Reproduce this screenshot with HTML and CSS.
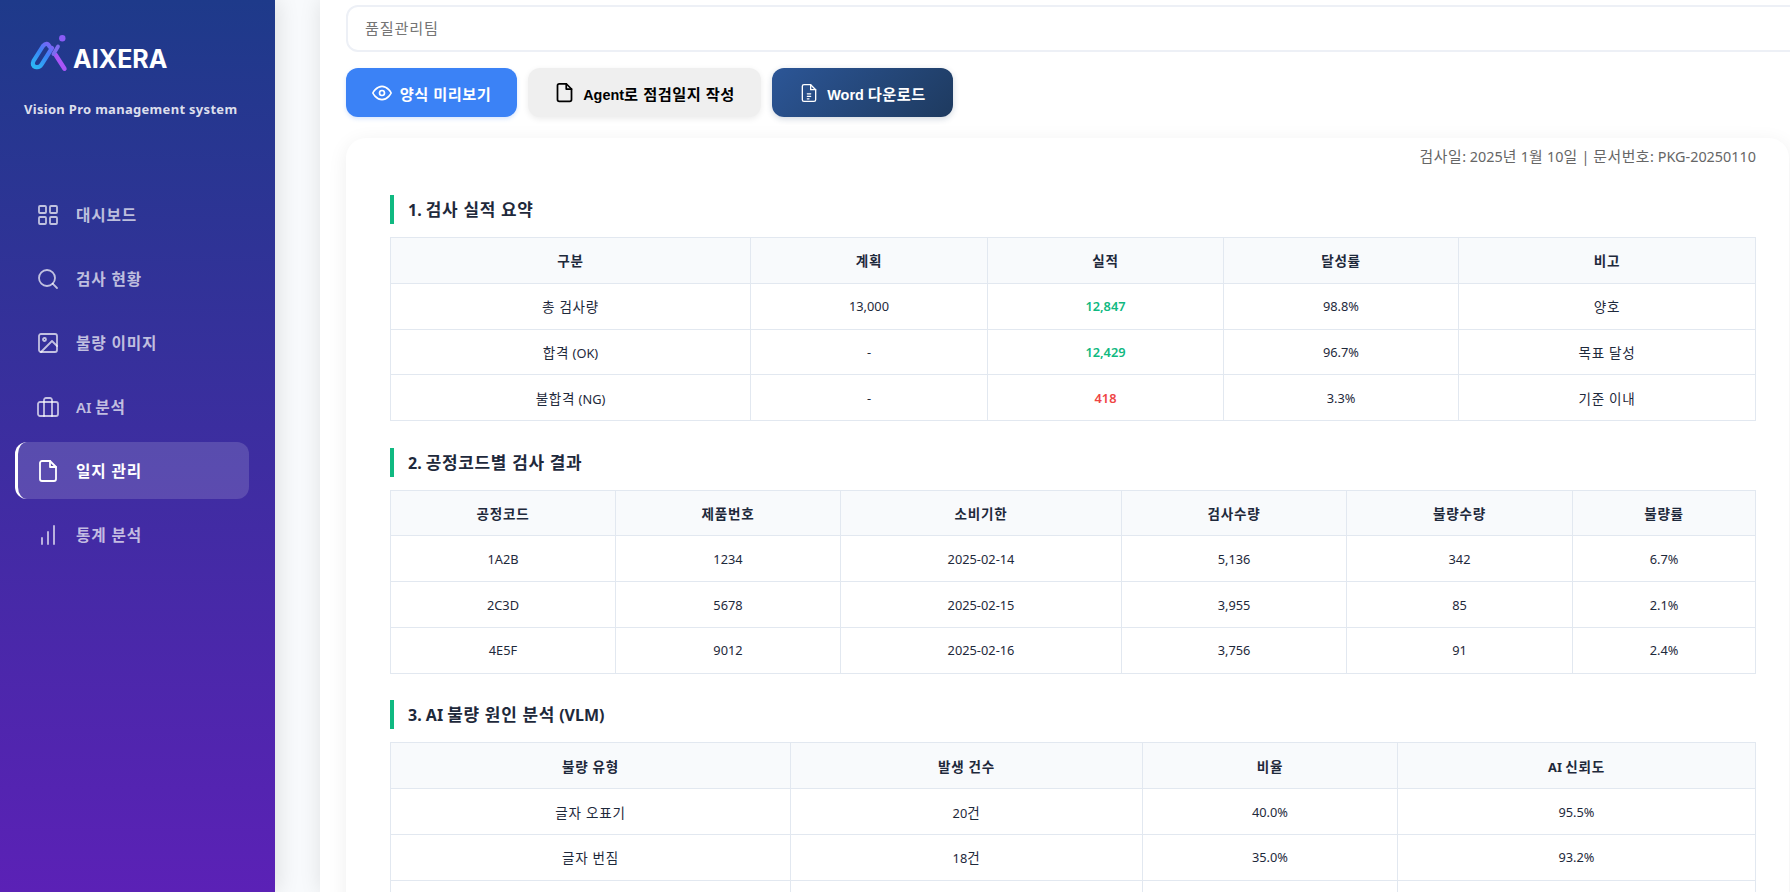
FILE: index.html
```html
<!DOCTYPE html>
<html lang="ko">
<head>
<meta charset="utf-8">
<title>AIXERA - Vision Pro management system</title>
<link rel="stylesheet" href="styles.css">
</head>
<body>
<div class="app">
  <aside class="sidebar">
    <div class="brand">
      <svg class="brand-mark" viewBox="8 3 40 45" fill="none" aria-hidden="true">
        <defs>
          <linearGradient id="clip" x1="12" y1="40" x2="32" y2="16" gradientUnits="userSpaceOnUse">
            <stop offset="0" stop-color="#2bb8f5"/>
            <stop offset=".55" stop-color="#3b82f6"/>
            <stop offset="1" stop-color="#8b5cf6"/>
          </linearGradient>
        </defs>
        <path d="M29.5 20.5Q27 15.500 23 20L13.500 35Q11.500 39.500 15.500 41Q19.500 42 21.500 38.500L32 22" stroke="url(#clip)" stroke-width="4.200" stroke-linecap="round"/>
        <path d="M35.700 29L44.500 42.800" stroke="#a855f7" stroke-width="4.400" stroke-linecap="round"/>
        <path d="M38 20.500L33.500 28" stroke="#7c6cf0" stroke-width="3.800" stroke-linecap="round"/>
        <circle cx="42.300" cy="12.300" r="3.200" fill="#8b5cf6"/>
      </svg>
      <span class="brand-name">AIXERA</span>
    </div>
    <p class="brand-sub">Vision Pro management system</p>
    <nav class="nav">
      <a class="nav-item">
        <svg class="nav-icon" viewBox="0 0 24 24"><rect x="3" y="3" width="7" height="7" rx="1"/><rect x="14" y="3" width="7" height="7" rx="1"/><rect x="3" y="14" width="7" height="7" rx="1"/><rect x="14" y="14" width="7" height="7" rx="1"/></svg>
        <span class="ko">대시보드</span>
      </a>
      <a class="nav-item">
        <svg class="nav-icon" viewBox="0 0 24 24"><circle cx="11" cy="11" r="8"/><path d="M21 21l-4.350-4.350"/></svg>
        <span class="ko">검사 현황</span>
      </a>
      <a class="nav-item">
        <svg class="nav-icon" viewBox="0 0 24 24"><rect x="3" y="3" width="18" height="18" rx="2"/><circle cx="8.500" cy="8.500" r="1.500"/><path d="M21 15l-5-5L5 21"/></svg>
        <span class="ko">불량 이미지</span>
      </a>
      <a class="nav-item">
        <svg class="nav-icon" viewBox="0 0 24 24"><rect x="2" y="7" width="20" height="14" rx="2"/><path d="M16 21V5a2 2 0 0 0-2-2h-4a2 2 0 0 0-2 2v16"/></svg>
        <span>AI <span class="ko">분석</span></span>
      </a>
      <a class="nav-item is-active">
        <svg class="nav-icon" viewBox="0 0 24 24"><path d="M14 2H6a2 2 0 0 0-2 2v16a2 2 0 0 0 2 2h12a2 2 0 0 0 2-2V8z"/><path d="M14 2v6h6"/></svg>
        <span class="ko">일지 관리</span>
      </a>
      <a class="nav-item">
        <svg class="nav-icon" viewBox="0 0 24 24"><path d="M18 21V3M12 21V9M6 21v-6"/></svg>
        <span class="ko">통계 분석</span>
      </a>
    </nav>
  </aside>

  <main class="main">
    <div class="panel">
      <input class="team-input" type="text" value="품질관리팀">
      <div class="actions">
        <button class="btn btn-blue" type="button">
          <svg class="btn-icon" viewBox="0 0 24 24"><path d="M1 12s4-8 11-8 11 8 11 8-4 8-11 8-11-8-11-8z"/><circle cx="12" cy="12" r="3"/></svg>
          <span class="ko">양식 미리보기</span>
        </button>
        <button class="btn btn-gray" type="button">
          <svg class="btn-icon btn-icon-file" viewBox="0 0 24 24"><path d="M14 2H6a2 2 0 0 0-2 2v16a2 2 0 0 0 2 2h12a2 2 0 0 0 2-2V8z"/><path d="M14 2v6h6"/></svg>
          <span>Agent<span class="ko">로 점검일지 작성</span></span>
        </button>
        <button class="btn btn-navy" type="button">
          <svg class="btn-icon btn-icon-doc" viewBox="0 0 24 24"><path d="M14 2H6a2 2 0 0 0-2 2v16a2 2 0 0 0 2 2h12a2 2 0 0 0 2-2V8z"/><path d="M14 2v6h6M10 13h4M10 16h4M10 19h2"/></svg>
          <span>Word <span class="ko">다운로드</span></span>
        </button>
      </div>

      <section class="report">
        <p class="report-meta"><span class="ko">검사일</span>: 2025<span class="ko">년</span> 1<span class="ko">월</span> 10<span class="ko">일</span> | <span class="ko">문서번호</span>: PKG-20250110</p>

        <h3 class="section-title">1. <span class="ko">검사 실적 요약</span></h3>
        <table class="data data-a">
          <colgroup><col class="c1"><col class="c2"><col class="c3"><col class="c4"><col class="c5"></colgroup>
          <thead><tr><th class="ko">구분</th><th class="ko">계획</th><th class="ko">실적</th><th class="ko">달성률</th><th class="ko">비고</th></tr></thead>
          <tbody>
            <tr><td class="ko">총 검사량</td><td>13,000</td><td class="ok">12,847</td><td>98.8%</td><td class="ko">양호</td></tr>
            <tr><td><span class="ko">합격</span> (OK)</td><td>-</td><td class="ok">12,429</td><td>96.7%</td><td class="ko">목표 달성</td></tr>
            <tr><td><span class="ko">불합격</span> (NG)</td><td>-</td><td class="ng">418</td><td>3.3%</td><td class="ko">기준 이내</td></tr>
          </tbody>
        </table>

        <h3 class="section-title">2. <span class="ko">공정코드별 검사 결과</span></h3>
        <table class="data data-b">
          <colgroup><col class="c1"><col class="c2"><col class="c3"><col class="c4"><col class="c5"><col class="c6"></colgroup>
          <thead><tr><th class="ko">공정코드</th><th class="ko">제품번호</th><th class="ko">소비기한</th><th class="ko">검사수량</th><th class="ko">불량수량</th><th class="ko">불량률</th></tr></thead>
          <tbody>
            <tr><td>1A2B</td><td>1234</td><td>2025-02-14</td><td>5,136</td><td>342</td><td>6.7%</td></tr>
            <tr><td>2C3D</td><td>5678</td><td>2025-02-15</td><td>3,955</td><td>85</td><td>2.1%</td></tr>
            <tr><td>4E5F</td><td>9012</td><td>2025-02-16</td><td>3,756</td><td>91</td><td>2.4%</td></tr>
          </tbody>
        </table>

        <h3 class="section-title">3. AI <span class="ko">불량 원인 분석</span> (VLM)</h3>
        <table class="data data-c">
          <colgroup><col class="c1"><col class="c2"><col class="c3"><col class="c4"></colgroup>
          <thead><tr><th class="ko">불량 유형</th><th class="ko">발생 건수</th><th class="ko">비율</th><th>AI <span class="ko">신뢰도</span></th></tr></thead>
          <tbody>
            <tr><td class="ko">글자 오표기</td><td>20<span class="ko">건</span></td><td>40.0%</td><td>95.5%</td></tr>
            <tr><td class="ko">글자 번짐</td><td>18<span class="ko">건</span></td><td>35.0%</td><td>93.2%</td></tr>
            <tr><td>&nbsp;</td><td>&nbsp;</td><td>&nbsp;</td><td>&nbsp;</td></tr>
          </tbody>
        </table>
      </section>
    </div>
  </main>
</div>
</body>
</html>
```

FILE: styles.css
```css
* { box-sizing: border-box; }

html, body {
  margin: 0;
  height: 100%;
  overflow: hidden;
}

body {
  font-family: "Noto Sans", "Noto Sans CJK KR", sans-serif;
  background: #f8fafc;
}

/* Hangul runs set slightly larger and looser than the Latin around them */
.ko {
  font-size: 1.06em;
  letter-spacing: 0.055em;
}

.app {
  display: flex;
  height: 892px;
  overflow: hidden;
}

/* Sidebar */
.sidebar {
  flex: 0 0 275px;
  display: flex;
  flex-direction: column;
  padding: 29px 0 0 15px;
  background: linear-gradient(180deg, #1e3a8a 0%, #5b21b6 100%);
  box-shadow: 4px 0 20px rgba(0, 0, 0, 0.1);
  position: relative;
  z-index: 2;
}

.brand {
  display: flex;
  align-items: flex-end;
  gap: 6px;
  margin-left: 13px;
  height: 45px;
}

.brand-mark {
  width: 40px;
  height: 45px;
  flex: none;
}

.brand-name {
  font-family: "Inter", "Noto Sans", sans-serif;
  font-size: 25px;
  line-height: 29px;
  font-weight: 700;
  color: #fff;
  margin-bottom: 0;
  margin-left: -1px;
}

.brand-sub {
  margin: 24px 0 0 9px;
  font-size: 13px;
  line-height: 22px;
  font-weight: 700;
  letter-spacing: 0.3px;
  color: rgba(255, 255, 255, 0.85);
}

.nav {
  display: flex;
  flex-direction: column;
  gap: 7px;
  margin-top: 66px;
  width: 234px;
}

.nav-item {
  display: flex;
  align-items: center;
  gap: 16px;
  height: 57px;
  padding-left: 18px;
  border-left: 3px solid transparent;
  border-radius: 12px;
  font-size: 14.800px;
  font-weight: 600;
  color: rgba(255, 255, 255, 0.7);
}

.nav-item.is-active {
  background: rgba(255, 255, 255, 0.15);
  border-left-color: #fff;
  color: #fff;
}

.nav-icon {
  width: 24px;
  height: 24px;
  flex: none;
  fill: none;
  stroke: currentColor;
  stroke-width: 1.800;
  stroke-linecap: round;
  stroke-linejoin: round;
}

/* Main */
.main {
  flex: 1;
  min-width: 0;
  padding-left: 45px;
  overflow: hidden;
}

.panel {
  height: 892px;
  padding: 5px 0 0 26px;
  background: #fff;
  box-shadow: 0 0 20px rgba(0, 0, 0, 0.1);
}

.team-input {
  display: block;
  width: 1460px;
  height: 47px;
  padding: 0 17px 3px;
  border: 2px solid #edf0f6;
  border-radius: 12px;
  background: #fff;
  font-family: inherit;
  font-size: 15.200px;
  letter-spacing: 0.8px;
  color: #757575;
  outline: none;
}

.actions {
  display: flex;
  gap: 11px;
  margin-top: 16px;
}

.btn {
  display: flex;
  align-items: center;
  justify-content: center;
  gap: 8px;
  height: 49px;
  border: 0;
  border-radius: 12px;
  font-family: "Liberation Sans", "Noto Sans CJK KR", sans-serif;
  font-size: 14.400px;
  font-weight: 700;
}

.btn .ko {
  letter-spacing: 0.03em;
}

.btn-icon {
  width: 20px;
  height: 20px;
  flex: none;
  fill: none;
  stroke: currentColor;
  stroke-width: 2;
  stroke-linecap: round;
  stroke-linejoin: round;
}

.btn-icon-file {
  width: 21px;
  height: 21px;
}

.btn-icon-doc {
  stroke-width: 1.600;
}

.btn-blue {
  width: 171px;
  background: #3b82f6;
  color: #fff;
  box-shadow: 0 2px 4px rgba(59, 130, 246, 0.2);
}

.btn-gray {
  width: 233px;
  background: #efefef;
  color: #000;
  box-shadow: 0 2px 6px rgba(0, 0, 0, 0.08);
}

.btn-navy {
  width: 181px;
  background: linear-gradient(135deg, #2c5697 0%, #1e3a5f 100%);
  color: #fff;
  box-shadow: 0 2px 6px rgba(30, 58, 95, 0.2);
}

/* Report card */
.report {
  width: 1443px;
  height: 780px;
  margin-top: 21px;
  padding: 0 33px 0 44px;
  background: #fff;
  border-radius: 20px;
  box-shadow: 0 4px 20px rgba(0, 0, 0, 0.07);
}

.report-meta {
  margin: 0;
  padding-top: 7px;
  height: 57px;
  text-align: right;
  font-size: 14.400px;
  line-height: 22px;
  color: #666;
}

.report-meta .ko {
  font-size: 1.03em;
  letter-spacing: 0.04em;
}

.section-title {
  margin: 0 0 13px;
  height: 29px;
  padding-left: 14px;
  border-left: 4px solid #10b981;
  font-size: 16px;
  line-height: 30px;
  font-weight: 700;
  color: #1e293b;
}

.section-title .ko {
  letter-spacing: 0.04em;
}

.data {
  width: 100%;
  table-layout: fixed;
  border-collapse: collapse;
  margin-bottom: 26.700px;
  font-size: 12.800px;
  color: #1e293b;
}

.data th,
.data td {
  height: 45.750px;
  padding: 0 8px;
  border: 1px solid #e2e8f0;
  text-align: center;
  font-weight: 400;
}

.data th {
  background: #f8fafc;
  font-weight: 700;
}

.data td.ok { color: #10b981; font-weight: 600; }
.data td.ng { color: #ef4444; font-weight: 600; }

.data-a .c1 { width: 360px; }
.data-a .c2 { width: 237px; }
.data-a .c3 { width: 236px; }
.data-a .c4 { width: 235px; }

.data-b .c1 { width: 225px; }
.data-b .c2 { width: 225px; }
.data-b .c3 { width: 281px; }
.data-b .c4 { width: 225px; }
.data-b .c5 { width: 226px; }

.data-c .c1 { width: 400px; }
.data-c .c2 { width: 352px; }
.data-c .c3 { width: 255px; }
```
